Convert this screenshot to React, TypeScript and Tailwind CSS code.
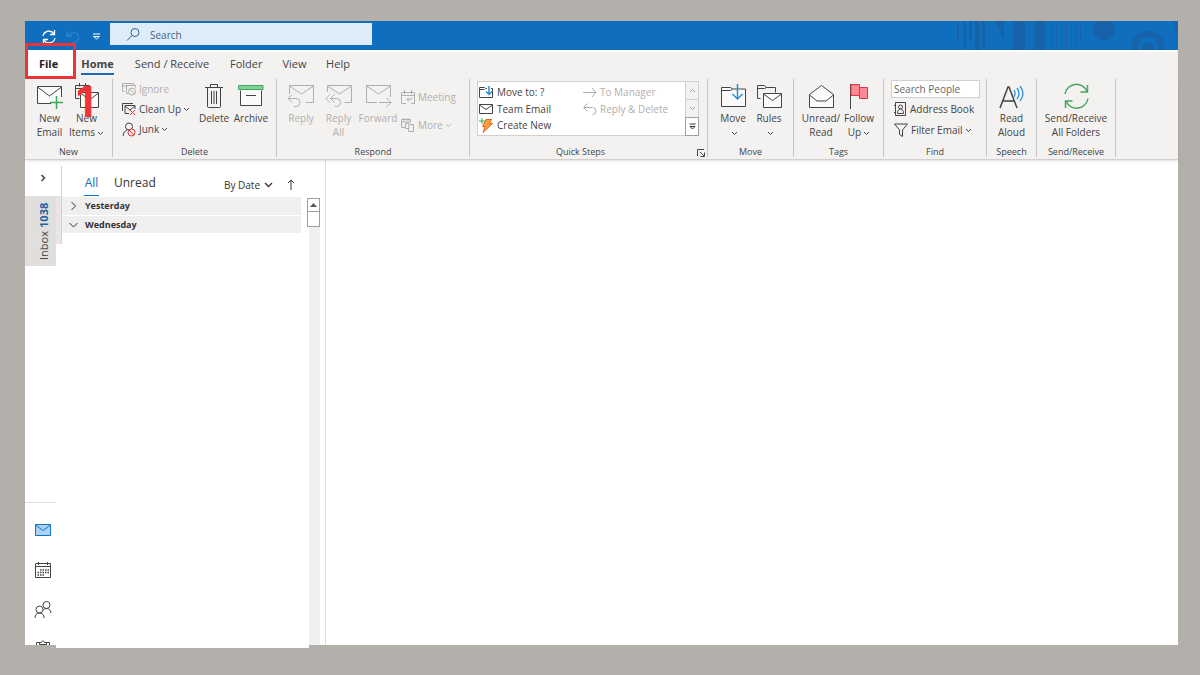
import type { ReactNode } from 'react'
import clsx from 'clsx'

interface IconProps {
  w: number
  h: number
  className?: string
  children: ReactNode
}

function Icon({ w, h, className, children }: IconProps) {
  return (
    <svg
      width={w}
      height={h}
      viewBox={`0 0 ${w} ${h}`}
      fill="none"
      stroke="currentColor"
      className={clsx('shrink-0', className)}
      aria-hidden="true"
    >
      {children}
    </svg>
  )
}

const Caret = () => (
  <Icon w={7} h={5} className="ml-[2px] inline-block align-middle">
    <path d="M1 1l2.5 2.5L6 1" />
  </Icon>
)

const NewEmailIcon = () => (
  <Icon w={28} h={26}>
    <path d="M15 20.5H1.5v-17h24V14" fill="#fafafa" />
    <path d="M1.5 4l12 9 12-9" />
    <path d="M20.5 13v13M14 19.5h13" stroke="#3aa757" strokeWidth="1.5" />
  </Icon>
)

const NewItemsIcon = () => (
  <Icon w={28} h={26}>
    <path d="M6.5 15.500h-4v-13h14v5M2.500 5.500h14M6.500 0v3.500M12.500 0v3.500" />
    <path d="M7.500 9.500h18v15h-18z" fill="#fafafa" />
    <path d="M7.500 10l9 7 9-7" />
  </Icon>
)

const TrashIcon = () => (
  <Icon w={20} h={26}>
    <path d="M1 4.5h18M6.500 4V1.500h7V4M3.500 4.500v19q0 1 1 1h11q1 0 1-1v-19M7.500 8v13M10 8v13M12.500 8v13" />
  </Icon>
)

const ArchiveIcon = () => (
  <Icon w={26} h={24}>
    <path d="M2.5 6.500v15h21v-15" fill="#fafafa" />
    <path d="M.5 1.500h24.500v4H.5z" fill="#7fd494" stroke="#43a660" />
    <path d="M8 11.500h10" />
  </Icon>
)

const ReplyIcon = () => (
  <Icon w={28} h={26}>
    <path d="M2.5 11V2.500h24v17h-8M2.500 3l12 8 12-8" />
    <path d="M5 11.500l-4 4 4 4M1 15.500h8q4 0 4 4t-4 4H7" />
  </Icon>
)

const ReplyAllIcon = () => (
  <Icon w={28} h={26}>
    <path d="M2.5 9V2.500h24v17h-7M2.500 3l12 8 12-8" />
    <path d="M5 11.500l-4 4 4 4M9.500 11.500l-4 4 4 4M5.500 15.500h6q4 0 4 4t-4 4H10" />
  </Icon>
)

const ForwardIcon = () => (
  <Icon w={28} h={26}>
    <path d="M13 19.5H2.500v-17h24V14M2.500 3l12 8 12-8" />
    <path d="M15 19.500h12M22.500 15l4.500 4.500-4.500 4.500" />
  </Icon>
)

const MoveIcon = () => (
  <Icon w={27} h={26}>
    <path d="M1.5 23.500v-19h9l2 1.500h13v17.500z" fill="#fafafa" />
    <path d="M1.500 7.500h9l2-1.500" />
    <path d="M17.500 1v15M12.500 11l5 5 5-5" stroke="#2b8fd8" strokeWidth="1.5" />
  </Icon>
)

const RulesIcon = () => (
  <Icon w={27} h={26}>
    <path d="M4.5 15.500h-3v-13h7l2 2h9v5M1.500 5.500h7l2-1" />
    <path d="M7.500 10.500h18v14h-18z" fill="#fafafa" />
    <path d="M7.500 11l9 6.500 9-6.500" />
  </Icon>
)

const OpenMailIcon = () => (
  <Icon w={27} h={26}>
    <path d="M1.5 11.500l12-9 12 9v13h-24z" fill="#fafafa" />
    <path d="M1.500 12l7.500 6h9l7.500-6" />
  </Icon>
)

const FlagIcon = () => (
  <Icon w={20} h={26}>
    <path d="M1.5 1v25" />
    <path d="M2 1.500h8.500v3h8v11h-8v-3H2z" fill="#ff8a94" stroke="#e0343f" />
    <path d="M10.500 4.500v8" stroke="#e0343f" />
  </Icon>
)

const ReadAloudIcon = () => (
  <Icon w={27} h={26}>
    <path d="M2 25L10 4h1l8 21M5 18h11.500" strokeWidth="1.5" />
    <path d="M16 7q2 3 0 7M19 5q4 5.500 0 11M22 3q6 7.500 0 15" stroke="#2b8fd8" strokeWidth="1.3" />
  </Icon>
)

const SendReceiveIcon = () => (
  <Icon w={27} h={26} className="text-[#43a660]">
    <path d="M2 11A11.500 11.500 0 0 1 24 8.500M25 15.500A11.500 11.500 0 0 1 3 18" strokeWidth="1.5" />
    <path d="M24.500 2v7h-7M2.500 25v-7h7" strokeWidth="1.5" />
  </Icon>
)

interface GroupProps {
  label: string
  className: string
  bodyClass?: string
  labelClass?: string
  launcher?: boolean
  children: ReactNode
}

function Group({ label, className, bodyClass, labelClass, launcher, children }: GroupProps) {
  return (
    <section aria-label={label} className={clsx('relative flex shrink-0 flex-col border-r border-[#c8c6c4]', className)}>
      <div className={clsx('flex h-[68px]', bodyClass)}>{children}</div>
      <div className={clsx('text-center text-[9px] leading-[10px] text-[#444]', labelClass)}>{label}</div>
      {launcher && (
        <button aria-label="Quick Steps settings" className="absolute right-[2px] bottom-0">
          <Icon w={8} h={8}>
            <path d="M.5 7V.5H7M3 3l4 4M7.500 3.500v4h-4" />
          </Icon>
        </button>
      )}
    </section>
  )
}

interface BigProps {
  icon: ReactNode
  lines: string[]
  caret?: 'inline' | 'below'
  disabled?: boolean
  className: string
}

function BigButton({ icon, lines, caret, disabled, className }: BigProps) {
  return (
    <button
      disabled={disabled}
      className={clsx(
        'flex shrink-0 flex-col items-center pt-[2px] text-[10px] leading-[14px] whitespace-nowrap',
        disabled ? 'text-[#b1afad]' : 'text-[#444]',
        className,
      )}
    >
      <span className="flex h-[30px] items-center">{icon}</span>
      {lines.map((line, i) => (
        <span key={line}>
          {line}
          {caret === 'inline' && i === lines.length - 1 && <Caret />}
        </span>
      ))}
      {caret === 'below' && (
        <span>
          <Caret />
        </span>
      )}
    </button>
  )
}

interface SmallProps {
  icon: ReactNode
  label: string
  caret?: boolean
  disabled?: boolean
  className?: string
}

function SmallButton({ icon, label, caret, disabled, className = 'h-5' }: SmallProps) {
  return (
    <button
      disabled={disabled}
      className={clsx(
        'flex items-center gap-[3px] text-[10px] whitespace-nowrap',
        disabled ? 'text-[#b1afad]' : 'text-[#444]',
        className,
      )}
    >
      {icon}
      <span>
        {label}
        {caret && <Caret />}
      </span>
    </button>
  )
}

function TitleBar() {
  return (
    <header className="relative flex h-[29px] items-start bg-[#106ebe] pt-[2px]">
      <div className="flex h-[27px] w-[85px] items-center pl-4 text-white">
        <button aria-label="Send/Receive All Folders">
          <Icon w={16} h={16}>
            <path d="M2 7a6 6 0 0 1 11-2M14 9a6 6 0 0 1-11 2" strokeWidth="1.3" />
            <path d="M13.500 1v4.500H9M2.500 15v-4.500H7" strokeWidth="1.3" />
          </Icon>
        </button>
        <button aria-label="Undo" className="ml-2 text-[#2f82cb]">
          <Icon w={15} h={14}>
            <path d="M2 1v5h5M2 6q4-4 8-3t3.500 5-5.500 5" strokeWidth="1.3" />
          </Icon>
        </button>
        <button aria-label="Customize Quick Access Toolbar" className="ml-3">
          <Icon w={9} h={7}>
            <path d="M1 1h7M1.500 3.500h6l-3 2.500z" />
          </Icon>
        </button>
      </div>
      <label className="relative z-10 flex h-[22px] w-[262px] items-center gap-[9px] bg-[#deecf9] pl-4 text-[#2f5f94]">
        <Icon w={15} h={15}>
          <circle cx="9" cy="5.5" r="4" />
          <path d="M6 8.500L1 13.500" />
        </Icon>
        <input
          aria-label="Search"
          placeholder="Search"
          className="w-full bg-transparent pt-[2px] text-[10px] outline-none placeholder:text-[#3f5f82]"
        />
      </label>
      <svg className="absolute top-0 right-0" width="228" height="29" viewBox="0 0 228 29" fill="#1763a9" aria-hidden="true">
        <path d="M7 0h2v21H7zM13 0h3v28h-3zM19 0h3v20h-3zM25 0h4v29h-4zM32 0h3v27h-3zM45 0h9v20z" />
        <path d="M63 0h12v29H63zM84 0h11v29H84z" />
        <path d="M101 0h1v29h-1zM106 0h1v29h-1zM111 0h1v29h-1zM116 0h1v29h-1zM121 0h1v27h-1zM125 0h1v29h-1zM130 0h1v20h-1zM135 0h1v12h-1z" />
        <circle cx="154" cy="8" r="11" />
        <circle cx="198" cy="27" r="14" fill="none" stroke="#1763a9" strokeWidth="6" />
        <circle cx="198" cy="27" r="6" />
        <path d="M224 0h4v16q-3-7-4-16z" />
      </svg>
    </header>
  )
}

function Tabs() {
  return (
    <nav className="flex h-[29px] items-stretch border-t-2 border-white text-[11px] text-[#444]">
      <button className="relative w-[51px] bg-white pr-1 pb-[2px] font-bold text-[#222]">
        File
        <span className="absolute inset-x-0 -top-[9px] bottom-0 border-[3px] border-[#ee3338]" />
      </button>
      <button className="ml-[5px] flex w-[33px] flex-col items-center font-bold">
        <span className="pt-1 leading-4">Home</span>
        <span className="mt-[1px] h-[2px] w-full bg-[#1d68b3]" />
      </button>
      <button className="ml-[19px] w-[78px] pb-[2px] whitespace-nowrap">Send / Receive</button>
      <button className="ml-[19px] w-8 pb-[2px]">Folder</button>
      <button className="ml-5 w-[25px] pb-[2px]">View</button>
      <button className="ml-[19px] w-6 pb-[2px]">Help</button>
    </nav>
  )
}

function QuickSteps() {
  return (
    <div className="mt-[2px] ml-[7px] flex h-[55px] w-[222px] border border-[#d2d0ce] bg-white">
      <div className="w-[105px] pt-px pl-px">
        <SmallButton
          className="h-[18px]"
          icon={
            <Icon w={15} h={14}>
              <path d="M.5 12.500v-10h5l1 1H8M12 3.500h1.500v9H.5M.5 4.500h5" />
              <path d="M10 1v8M7 6.500l3 3 3-3" stroke="#2b8fd8" strokeWidth="1.5" />
            </Icon>
          }
          label="Move to: ?"
        />
        <SmallButton
          className="h-4"
          icon={
            <Icon w={15} h={12}>
              <path d="M.5 1.500h13v9H.5zM.5 2l6.500 4.500L13.500 2" />
            </Icon>
          }
          label="Team Email"
        />
        <SmallButton
          className="h-[17px]"
          icon={
            <Icon w={15} h={15}>
              <path d="M7 1.500h5.500l-2 4h3L4 14.500l2-6H3.500z" fill="#f9a13a" stroke="#e0672a" />
              <path d="M3 0v6M0 3h6" stroke="#3aa757" />
            </Icon>
          }
          label="Create New"
        />
      </div>
      <div className="flex-1 pt-px">
        <SmallButton
          disabled
          className="h-[18px]"
          icon={
            <Icon w={14} h={11}>
              <path d="M0 5.500h13M9 1l4 4.500L9 10" />
            </Icon>
          }
          label="To Manager"
        />
        <SmallButton
          disabled
          className="h-4"
          icon={
            <Icon w={14} h={12}>
              <path d="M4.500.5L.5 4.500l4 4M1 4.500h8.500q3.500 0 3.500 3.500t-3.500 3.500" />
            </Icon>
          }
          label="Reply &amp; Delete"
        />
      </div>
      <div className="flex w-[13px] flex-col border-l border-[#d2d0ce] text-[#a19f9d]">
        <button aria-label="Previous steps" className="flex flex-1 items-center justify-center border-b border-[#d2d0ce] bg-[#f3f2f1]">
          <Icon w={7} h={5}>
            <path d="M1 4l2.500-2.500L6 4" />
          </Icon>
        </button>
        <button aria-label="Next steps" className="flex flex-1 items-center justify-center bg-[#f3f2f1]">
          <Icon w={7} h={5}>
            <path d="M1 1l2.500 2.500L6 1" />
          </Icon>
        </button>
        <button aria-label="All steps" className="-mx-px -mb-px flex h-[19px] items-center justify-center border border-[#a19f9d] text-[#333]">
          <Icon w={7} h={7}>
            <path d="M.5 1h6M1 3.500h5L3.500 6z" />
          </Icon>
        </button>
      </div>
    </div>
  )
}

function Ribbon() {
  return (
    <div className="relative z-20 flex h-[81px] border-b border-[#d2d0ce] bg-[#f3f2f1] pb-[2px] text-[#444] shadow-sm">
      <Group label="New" className="w-[88px]" bodyClass="pl-[6px]">
        <BigButton className="w-[37px]" icon={<NewEmailIcon />} lines={['New', 'Email']} />
        <BigButton className="w-[37px]" icon={<NewItemsIcon />} lines={['New', 'Items']} caret="inline" />
      </Group>
      <Group label="Delete" className="w-[164px]">
        <div className="w-[83px] pl-[9px]">
          <SmallButton
            disabled
            icon={
              <Icon w={14} h={14}>
                <path d="M2.500 9.500h-2v-8h11v2M.5 4h5M13.500 5.500v-2h-9v8h2" />
                <circle cx="10" cy="9.5" r="3.5" />
                <path d="M7.500 7l5 5" />
              </Icon>
            }
            label="Ignore"
          />
          <SmallButton
            icon={
              <Icon w={14} h={14}>
                <path d="M.5 9V1.500H11M3 11.500h4M3 11.500v-8h10V7M3 4l5 4 5-4" />
                <path d="M8 8l5 5M13 8l-5 5" stroke="#e0343f" />
              </Icon>
            }
            label="Clean Up"
            caret
          />
          <SmallButton
            icon={
              <Icon w={14} h={15}>
                <circle cx="7" cy="4.5" r="3.5" />
                <path d="M1 14q0-4.500 4-6" />
                <circle cx="9.5" cy="10.5" r="3.5" stroke="#e0343f" fill="#f3f2f1" />
                <path d="M7 8l5 5" stroke="#e0343f" />
              </Icon>
            }
            label="Junk"
            caret
          />
        </div>
        <BigButton className="w-9" icon={<TrashIcon />} lines={['Delete']} />
        <BigButton className="w-[38px]" icon={<ArchiveIcon />} lines={['Archive']} />
      </Group>
      <Group label="Respond" className="w-[193px]" bodyClass="pl-[5px]">
        <BigButton disabled className="w-[38px]" icon={<ReplyIcon />} lines={['Reply']} />
        <BigButton disabled className="w-[37px]" icon={<ReplyAllIcon />} lines={['Reply', 'All']} />
        <BigButton disabled className="w-[42px]" icon={<ForwardIcon />} lines={['Forward']} />
        <div className="flex flex-col gap-2 pt-2 pl-[2px]">
          <SmallButton
            disabled
            icon={
              <Icon w={14} h={14}>
                <path d="M5 13.500H.5v-11h13v11H10M.5 5.500h13M3.500 0v4M10.500 0v4M8 7.500l-2 2 2 2M6 9.500h3q2 0 2-2" />
              </Icon>
            }
            label="Meeting"
          />
          <SmallButton
            disabled
            icon={
              <Icon w={14} h={14}>
                <path d="M5 9.500H.5v-8h9V4M.5 4h9M3 0v3M7 0v3M4.500 5.500H8v5H4.500zM8.500 6.500h4v7h-5v-3" />
              </Icon>
            }
            label="More"
            caret
          />
        </div>
      </Group>
      <Group label="Quick Steps" className="w-[238px]" labelClass="pr-4" launcher>
        <QuickSteps />
      </Group>
      <Group label="Move" className="w-[86px]" bodyClass="pl-[7px]">
        <BigButton className="w-9" icon={<MoveIcon />} lines={['Move']} caret="below" />
        <BigButton className="w-9" icon={<RulesIcon />} lines={['Rules']} caret="below" />
      </Group>
      <Group label="Tags" className="w-[90px]" bodyClass="pl-[7px]">
        <BigButton className="w-10" icon={<OpenMailIcon />} lines={['Unread/', 'Read']} />
        <BigButton className="w-9" icon={<FlagIcon />} lines={['Follow', 'Up']} caret="inline" />
      </Group>
      <Group label="Find" className="w-[103px]" bodyClass="pl-[7px]">
        <div>
          <input
            aria-label="Search People"
            placeholder="Search People"
            className="mt-px block h-[18px] w-[89px] border border-[#d2d0ce] bg-white pl-[2px] text-[10px] outline-none placeholder:text-[#666]"
          />
          <div className="pl-[3px]">
            <SmallButton
              className="h-[22px]"
              icon={
                <Icon w={13} h={14}>
                  <path d="M1.500.5h10v13h-10zM0 3.500h2M0 10.500h2" />
                  <circle cx="6.5" cy="5" r="2" />
                  <path d="M3.500 11.500q0-4.500 3-4.500t3 4.500z" />
                </Icon>
              }
              label="Address Book"
            />
            <SmallButton
              icon={
                <Icon w={14} h={14}>
                  <path d="M.5 1h13L8.500 7v6.500l-3-2V7z" />
                </Icon>
              }
              label="Filter Email"
              caret
            />
          </div>
        </div>
      </Group>
      <Group label="Speech" className="w-[50px]">
        <BigButton className="w-[49px]" icon={<ReadAloudIcon />} lines={['Read', 'Aloud']} />
      </Group>
      <Group label="Send/Receive" className="w-[79px]">
        <BigButton className="w-[78px]" icon={<SendReceiveIcon />} lines={['Send/Receive', 'All Folders']} />
      </Group>
    </div>
  )
}

function Rail() {
  return (
    <aside className="flex w-[31px] flex-col text-[#444]">
      <button aria-label="Expand folder pane" className="flex h-9 items-center justify-center pl-1">
        <Icon w={6} h={8}>
          <path d="M1.500 1l3 3-3 3" strokeWidth="1.5" />
        </Icon>
      </button>
      <button className="flex h-[70px] items-center justify-center bg-[#e1dfdd] pl-2 text-[11px]">
        <span className="rotate-180 [writing-mode:vertical-rl]">
          Inbox <b className="ml-px font-bold text-[#1d5fa8]">1038</b>
        </span>
      </button>
      <nav className="mt-auto flex h-[143px] flex-col items-center overflow-hidden border-t border-[#e1dfdd] pt-[17px] pl-1">
        <button aria-label="Mail" className="flex h-5 shrink-0 items-center">
          <Icon w={16} h={12} className="text-[#1673c4]">
            <path d="M.5.5h15v11H.5z" fill="#a9d3f5" />
            <path d="M.5 1L8 6.500 15.500 1" />
          </Icon>
        </button>
        <button aria-label="Calendar" className="mt-5 flex h-5 shrink-0 items-center">
          <Icon w={16} h={17}>
            <path d="M.5 1.500h15v14H.5zM.5 4.500h15M3.500 0v3M12.500 0v3" />
            <path d="M5 8h9M2.500 10.500H14M2.500 13H9" strokeWidth="1.5" strokeDasharray="1.5 1" />
          </Icon>
        </button>
        <button aria-label="People" className="mt-5 flex h-5 shrink-0 items-center">
          <Icon w={18} h={18}>
            <circle cx="5.5" cy="8.5" r="3.5" />
            <path d="M1 17q0-5 4.500-5t4.500 5" />
            <circle cx="12.5" cy="4" r="3.5" />
            <path d="M9 9q1-1.500 3.500-1.500 4 0 4.500 4.500" />
          </Icon>
        </button>
        <button aria-label="Tasks" className="mt-[19px] flex h-5 shrink-0 items-center">
          <Icon w={16} h={18}>
            <path d="M5 2.500H1.500v14h13v-14H11M4.500 4.500V2.500h2Q8-1 9.500 2.500h2v2z" />
          </Icon>
        </button>
      </nav>
    </aside>
  )
}

function MessageList() {
  return (
    <section className="z-10 -mb-[3px] flex w-[253px] bg-white text-[#333]">
      <div className="w-[6px] pt-[6px]">
        <div className="h-[30px] border-r border-[#d2d0ce]" />
        <div className="h-12 border-r border-[#d2d0ce] bg-[#e8e6e4]" />
      </div>
      <div className="w-[239px]">
        <div className="flex h-9 items-end">
          <button className="ml-[22px] flex flex-col text-[12px] leading-4 text-[#106ebe]">
            All
            <span className="mt-1 h-px w-[15px] bg-[#106ebe]" />
          </button>
          <button className="mb-[5px] ml-[15px] text-[12px] leading-4">Unread</button>
          <button className="mr-[14px] mb-[3px] ml-auto flex items-center gap-1 text-[10px] leading-4">
            By Date
            <Icon w={9} h={6}>
              <path d="M1 1l3.500 3.500L8 1" strokeWidth="1.3" />
            </Icon>
          </button>
          <button aria-label="Sort ascending" className="mr-[6px] mb-[6px]">
            <Icon w={8} h={11}>
              <path d="M4 11V1M1 4l3-3 3 3" />
            </Icon>
          </button>
        </div>
        <button className="mt-px flex h-[18px] w-full items-center gap-2 bg-[#efefef] pl-2 text-[9px] font-bold">
          <Icon w={7} h={10}>
            <path d="M1.500 1l4 4-4 4" />
          </Icon>
          Yesterday
        </button>
        <button className="mt-px flex h-[17px] w-full items-center gap-[7px] bg-[#efefef] pl-[7px] text-[9px] font-bold">
          <Icon w={9} h={6}>
            <path d="M.5 1l4 4 4-4" />
          </Icon>
          Wednesday
        </button>
      </div>
    </section>
  )
}

function ScrollBar() {
  return (
    <div className="z-10 -ml-[2px] flex w-[19px] flex-col border-r border-[#e1dfdd] pt-[38px]">
      <button aria-label="Scroll up" className="flex h-[14px] w-[13px] items-center justify-center border border-[#a19f9d] bg-white">
        <Icon w={7} h={4}>
          <path d="M0 4l3.500-4L7 4z" fill="#555" stroke="none" />
        </Icon>
      </button>
      <div className="h-[15px] w-[13px] border border-t-0 border-[#a19f9d] bg-white" />
      <div className="ml-[2px] w-[11px] flex-1 bg-[#f0f0f0]" />
    </div>
  )
}

export default function App() {
  return (
    <div className="flex min-h-screen flex-col bg-[#b3b0ab] pt-[21px] pr-[22px] pb-[30px] pl-[25px] font-['Open_Sans','Noto_Sans',sans-serif]">
      <div className="relative flex flex-1 flex-col bg-white">
        <TitleBar />
        <div className="bg-[#f3f2f1]">
          <Tabs />
          <Ribbon />
        </div>
        <div className="flex flex-1">
          <Rail />
          <MessageList />
          <ScrollBar />
          <main className="flex-1" />
        </div>
        {/* step marker */}
        <span className="absolute top-14 left-[51px] z-30 font-['Inter',sans-serif] text-[42px] leading-[50px] font-bold text-[#ee3338]">
          1
        </span>
      </div>
    </div>
  )
}
